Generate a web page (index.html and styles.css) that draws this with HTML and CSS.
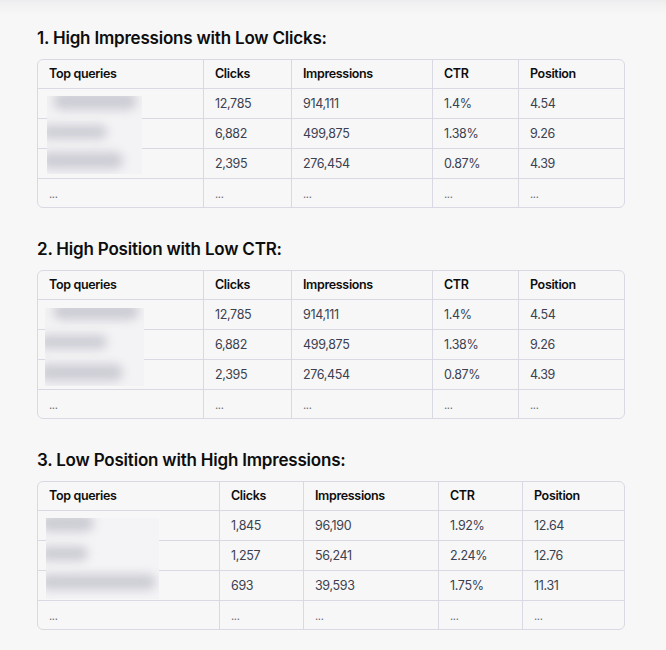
FILE: index.html
```html
<!DOCTYPE html>
<html lang="en">
<head>
<meta charset="utf-8">
<title>Search queries</title>
<link rel="stylesheet" href="styles.css">
</head>
<body>
<main class="page">
  <section class="block">
    <h3 class="title">1. High Impressions with Low Clicks:</h3>
    <div class="table-wrap">
      <table class="grid cols-a">
        <thead>
          <tr><th class="c1">Top queries</th><th class="c2">Clicks</th><th class="c3">Impressions</th><th class="c4">CTR</th><th class="c5">Position</th></tr>
        </thead>
        <tbody>
          <tr><td></td><td>12,785</td><td>914,111</td><td>1.4%</td><td>4.54</td></tr>
          <tr><td></td><td>6,882</td><td>499,875</td><td>1.38%</td><td>9.26</td></tr>
          <tr><td></td><td>2,395</td><td>276,454</td><td>0.87%</td><td>4.39</td></tr>
          <tr class="last"><td>...</td><td>...</td><td>...</td><td>...</td><td>...</td></tr>
        </tbody>
      </table>
      <div class="redact redact-a">
        <span class="blob b1"></span><span class="blob b2"></span><span class="blob b3"></span>
      </div>
    </div>
  </section>

  <section class="block">
    <h3 class="title">2. High Position with Low CTR:</h3>
    <div class="table-wrap">
      <table class="grid cols-a">
        <thead>
          <tr><th class="c1">Top queries</th><th class="c2">Clicks</th><th class="c3">Impressions</th><th class="c4">CTR</th><th class="c5">Position</th></tr>
        </thead>
        <tbody>
          <tr><td></td><td>12,785</td><td>914,111</td><td>1.4%</td><td>4.54</td></tr>
          <tr><td></td><td>6,882</td><td>499,875</td><td>1.38%</td><td>9.26</td></tr>
          <tr><td></td><td>2,395</td><td>276,454</td><td>0.87%</td><td>4.39</td></tr>
          <tr class="last"><td>...</td><td>...</td><td>...</td><td>...</td><td>...</td></tr>
        </tbody>
      </table>
      <div class="redact redact-b">
        <span class="blob b1"></span><span class="blob b2"></span><span class="blob b3"></span>
      </div>
    </div>
  </section>

  <section class="block">
    <h3 class="title">3. Low Position with High Impressions:</h3>
    <div class="table-wrap">
      <table class="grid cols-b">
        <thead>
          <tr><th class="c1">Top queries</th><th class="c2">Clicks</th><th class="c3">Impressions</th><th class="c4">CTR</th><th class="c5">Position</th></tr>
        </thead>
        <tbody>
          <tr><td></td><td>1,845</td><td>96,190</td><td>1.92%</td><td>12.64</td></tr>
          <tr><td></td><td>1,257</td><td>56,241</td><td>2.24%</td><td>12.76</td></tr>
          <tr><td></td><td>693</td><td>39,593</td><td>1.75%</td><td>11.31</td></tr>
          <tr class="last"><td>...</td><td>...</td><td>...</td><td>...</td><td>...</td></tr>
        </tbody>
      </table>
      <div class="redact redact-c">
        <span class="blob b1"></span><span class="blob b2"></span><span class="blob b3"></span>
      </div>
    </div>
  </section>
</main>
</body>
</html>
```

FILE: styles.css
```css
* { box-sizing: border-box; }

html, body {
  margin: 0;
  padding: 0;
}

body {
  background: linear-gradient(to bottom, #ececee 0px, #f1f1f2 4px, #f7f7f7 16px, #f7f7f7 100%);
  min-height: 650px;
  font-family: Inter, "Noto Sans", "Liberation Sans", sans-serif;
  color: #374151;
}

.page {
  padding: 26px 0 0 37px;
  width: 625px;
}

.block + .block {
  margin-top: 29px;
}

.title {
  margin: 0 0 9px 0;
  font-size: 17px;
  line-height: 24px;
  font-weight: 600;
  color: #0d0d0d;
  letter-spacing: -0.2px;
}

.table-wrap {
  position: relative;
  width: 588px;
}

.grid {
  width: 588px;
  table-layout: fixed;
  border-collapse: separate;
  border-spacing: 0;
  border: 1px solid #d9d9e3;
  border-radius: 6px;
  font-size: 12.5px;
  line-height: 20px;
  letter-spacing: -0.35px;
}

.grid th,
.grid td {
  text-align: left;
  padding: 4px 12px 4px 11px;
  border-right: 1px solid #d9d9e3;
  border-bottom: 1px solid #d9d9e3;
  white-space: nowrap;
  overflow: hidden;
}

.grid th:last-child,
.grid td:last-child {
  border-right: none;
}

.grid th {
  font-weight: 600;
  color: #0d0d0d;
}

.grid td {
  font-weight: 400;
  color: #3b4150;
  padding-top: 5px;
}

.grid tr.last td {
  border-bottom: none;
  padding-top: 5px;
  padding-bottom: 3px;
  color: #6b6b78;
  font-size: 11px;
}

.cols-a .c1 { width: 166px; }
.cols-a .c2 { width: 88px; }
.cols-a .c3 { width: 141px; }
.cols-a .c4 { width: 86px; }

.cols-b .c1 { width: 182px; }
.cols-b .c2 { width: 84px; }
.cols-b .c3 { width: 135px; }
.cols-b .c4 { width: 84px; }

/* blurred redaction overlays */
.redact {
  position: absolute;
  overflow: hidden;
  background: #f3f3f5;
}

.blob {
  position: absolute;
  display: block;
  background: #cdcdd5;
  border-radius: 9px;
  filter: blur(5px);
}

.redact-a { left: 10px; top: 37px; width: 95px; height: 78px; }
.redact-a .b1 { left: 6px; top: -4px; width: 84px; height: 18px; }
.redact-a .b2 { left: -6px; top: 29px; width: 66px; height: 14px; }
.redact-a .b3 { left: -6px; top: 56px; width: 82px; height: 17px; }

.redact-b { left: 8px; top: 38px; width: 99px; height: 78px; }
.redact-b .b1 { left: 8px; top: -6px; width: 86px; height: 18px; }
.redact-b .b2 { left: -6px; top: 27px; width: 68px; height: 14px; }
.redact-b .b3 { left: -6px; top: 56px; width: 84px; height: 17px; }

.redact-c { left: 9px; top: 37px; width: 113px; height: 81px; background: #f4f4f6; }
.redact-c .b1 { left: -6px; top: -4px; width: 54px; height: 18px; }
.redact-c .b2 { left: -6px; top: 28px; width: 48px; height: 15px; }
.redact-c .b3 { left: -6px; top: 56px; width: 116px; height: 16px; }
```
